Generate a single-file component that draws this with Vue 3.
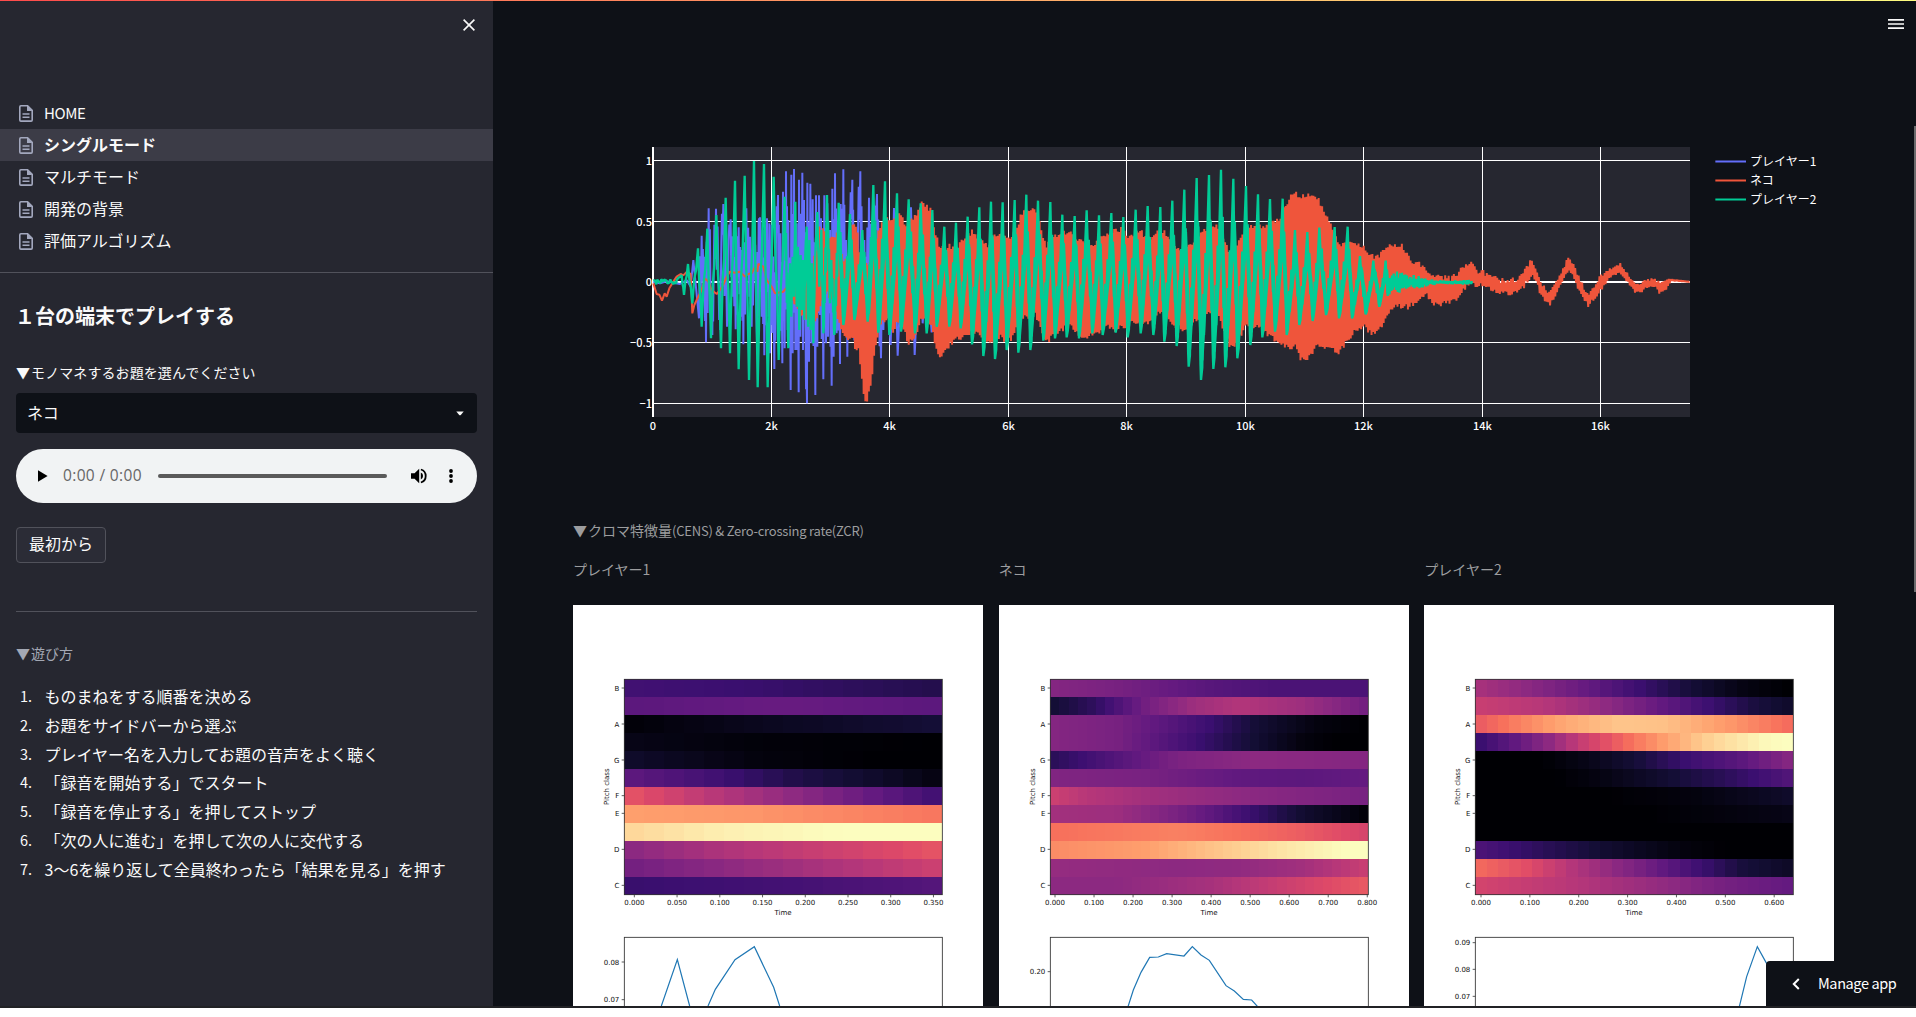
<script setup>
const pages = ['HOME', 'シングルモード', 'マルチモード', '開発の背景', '評価アルゴリズム']
const steps = [
  'ものまねをする順番を決める',
  'お題をサイドバーから選ぶ',
  'プレイヤー名を入力してお題の音声をよく聴く',
  '「録音を開始する」でスタート',
  '「録音を停止する」を押してストップ',
  '「次の人に進む」を押して次の人に交代する',
  '3〜6を繰り返して全員終わったら「結果を見る」を押す',
]

// Deterministic jitter in -1..1
const noise = (i) => {
  const s = Math.sin(i * 12.9898) * 43758.5453
  return (s - Math.floor(s)) * 2 - 1
}
const pairs = (flat) => {
  const out = []
  for (let i = 0; i < flat.length; i += 2) out.push([flat[i], flat[i + 1]])
  return out
}
const join = (pts) => pts.map((p) => p[0].toFixed(1) + ',' + p[1].toFixed(1)).join(' ')

// Waveforms, in thirds of a pixel
const player2Peaks = pairs([
  170, 450, 185, 435, 192, 495, 204, 402, 217, 520, 234, 355, 245, 590, 262, 296, 273, 625, 289, 255, 303, 655, 317, 203,
  330, 670, 345, 152, 356, 718, 374, 137, 387, 750, 402, 93, 413, 772, 432, 102, 443, 772, 461, 140, 476, 690,
  494, 200, 505, 655, 510, 400, 514, 560, 518, 380, 522, 500, 526, 215, 530, 530, 534, 350, 538, 600, 542, 375, 546, 540,
  549, 390, 553, 570, 556, 370, 560, 290, 564, 590, 568, 330, 572, 600, 576, 400, 580, 640, 585, 400, 592, 246, 598, 470,
  604, 300, 610, 610, 621, 195, 630, 520, 634, 390, 643, 615, 656, 218,
  670, 585, 690, 252, 703, 570, 727, 300, 743, 575, 760, 165, 775, 608, 795, 154, 808, 615, 831, 190, 843, 605,
  866, 208, 885, 610, 902, 220, 920, 610, 937, 240, 950, 590, 973, 290, 988, 590, 1008, 278, 1022, 595, 1043, 260,
  1056, 643, 1078, 232, 1090, 678, 1113, 215, 1125, 687, 1148, 217, 1160, 660, 1184, 210, 1195, 668, 1219, 194,
  1231, 660, 1254, 212, 1270, 632, 1291, 216, 1305, 625, 1327, 254, 1340, 622, 1364, 258, 1377, 625, 1400, 241,
  1417, 610, 1437, 256, 1448, 615, 1474, 249, 1487, 608, 1510, 261, 1523, 622, 1547, 239, 1562, 610, 1583, 228,
  1600, 615, 1621, 231, 1633, 635, 1657, 212, 1670, 648, 1693, 179, 1706, 710, 1730, 144, 1743, 750, 1767, 135,
  1780, 717, 1803, 119, 1816, 712, 1840, 146, 1852, 685, 1878, 168, 1891, 645, 1914, 193, 1927, 622, 1950, 207,
  1965, 605, 1988, 206, 2000, 615, 2025, 300, 2038, 585, 2062, 306, 2078, 573, 2098, 293, 2118, 555, 2144, 291,
  2157, 565, 2183, 290, 2196, 565, 2220, 378, 2237, 553, 2260, 392, 2278, 530, 2297, 392, 2303, 498,
])
function player2Line() {
  const pts = []
  for (let x = 100; x < 170; x += 3) pts.push([x, 456 + noise(x) * 8])
  const plain = [[0, 0], [0.35, 0.45], [0.65, 0.6]]
  // falling edges stay steep, rising edges carry a short reversal near the middle
  const fall = [[0, 0], [0.28, 0.42], [0.38, 0.24], [0.58, 0.7], [0.7, 0.5], [0.88, 0.92]]
  const rise = [[0, 0], [0.16, 0.06], [0.3, 0.42], [0.38, 0.22], [0.56, 0.62], [0.66, 0.44], [0.82, 0.76]]
  player2Peaks.forEach(([x, y], i) => {
    const next = player2Peaks[i + 1]
    if (!next) return pts.push([x, y])
    const shape = x < 480 || next[0] - x < 8 ? plain : next[1] > y ? fall : rise
    for (const [tx, ty] of shape) pts.push([x + (next[0] - x) * tx, y + (next[1] - y) * ty])
  })
  for (let x = 2306, k = 0; x < 2557; x += 2.5, k++) {
    const fade = x < 2450 ? 7 + (2450 - x) * 0.22 : 7
    pts.push([x, 457 + (k % 2 ? 1 : -1) * fade * (0.65 + 0.35 * noise(k))])
  }
  return join(pts)
}
// Broad inner body of the same wave, with the peaks held short of their tips
const player2Body = join(player2Peaks
  .filter(([x]) => x > 650)
  .map(([x, y]) => [x + 2, 456 + (y - 456) * (y < 456 ? 0.58 : 0.8)]))

const player1Base = pairs([
  100, 456, 120, 460, 140, 454, 160, 458, 180, 462, 200, 450, 212, 470, 220, 390, 237, 565, 245, 317, 251, 500, 254, 380,
  258, 637, 266, 235, 272, 520, 277, 615, 281, 430, 288, 236, 296, 480, 301, 600, 304, 340, 310, 222, 321, 590, 326, 330,
  332, 268, 338, 500, 341, 320, 347, 598, 352, 400, 356, 292, 363, 560, 366, 360, 370, 643, 379, 235, 388, 500,
  390, 320, 395, 590, 402, 300, 408, 500, 411, 640, 416, 275, 420, 262, 425, 560, 428, 300, 433, 676, 441, 265,
  446, 560, 448, 280, 450, 670, 455, 284, 463, 717, 468, 330, 474, 195, 478, 600, 481, 310, 487, 700, 489, 185,
  494, 655, 498, 124, 503, 600, 505, 270, 512, 780, 514, 134, 518, 670, 522, 117, 526, 660, 530, 280, 536, 787,
  537, 149, 541, 620, 547, 128, 549, 660, 552, 210, 557, 650, 561, 820, 562, 158, 567, 695, 571, 161, 574, 640,
  578, 208, 586, 795, 588, 196, 592, 650, 597, 196, 600, 555, 603, 265, 610, 748, 613, 196, 618, 640, 622, 220,
  624, 620, 630, 300, 635, 767, 637, 176, 641, 680, 645, 130, 650, 610, 654, 300, 660, 702, 662, 222, 666, 590,
  670, 118, 675, 600, 678, 330, 682, 680, 690, 300, 697, 149, 701, 560, 708, 655, 714, 310, 721, 124, 727, 600,
  733, 330, 740, 560, 747, 203, 755, 560, 760, 330, 771, 192, 777, 540, 783, 685, 795, 300, 805, 530, 812, 645,
  822, 234, 833, 677, 850, 300, 860, 560, 873, 232, 884, 675, 900, 330, 908, 580, 920, 400, 935, 607, 945, 456,
])
// Each swing is doubled by a smaller one through the middle band
const player1Points = player1Base.flatMap(([x, y], i) => {
  const next = player1Base[i + 1]
  if (!next || x < 225 || x > 790 || next[0] - x < 3.5) return [[x, y]]
  const dx = next[0] - x
  const dy = next[1] - y
  return [[x, y], [x + dx * 0.3, y + dy * 0.75], [x + dx * 0.6, y + dy * 0.22]]
})

const catStart = pairs([
  100, 460, 110, 492, 118, 494, 126, 512, 134, 490, 140, 500, 148, 475, 160, 455, 170, 440, 182, 432, 190, 436,
  200, 426, 212, 432, 217, 550, 223, 525, 230, 510, 245, 480, 255, 445, 265, 455, 275, 480, 290, 492, 300, 480,
  310, 465, 320, 440, 330, 425, 345, 428, 360, 425, 375, 440, 385, 432, 395, 430, 405, 412, 412, 425, 415, 402,
  430, 410, 440, 450, 455, 470, 465, 490, 490, 485, 510, 460,
])
// x, upper edge, lower edge
const catEnvelope = [
  510, 455, 480, 520, 440, 520, 545, 430, 550, 565, 420, 580, 580, 400, 590, 598, 295, 540, 612, 295, 480, 622, 330, 490,
  640, 325, 520, 653, 305, 560, 662, 370, 600, 672, 390, 625, 685, 400, 635, 697, 290, 620, 705, 288, 655, 715, 320, 660,
  722, 420, 715, 730, 400, 790, 737, 400, 820, 747, 400, 790, 755, 390, 745, 765, 350, 660, 775, 310, 600, 785, 280, 570,
  800, 270, 568, 820, 272, 600, 843, 248, 560, 857, 290, 620, 867, 270, 640, 885, 262, 615, 900, 225, 580, 912, 218, 555,
  920, 228, 580, 935, 245, 585, 945, 310, 640, 955, 340, 670, 963, 355, 680, 985, 350, 650, 1010, 350, 628,
  1035, 325, 620, 1057, 302, 600, 1075, 320, 615, 1100, 350, 635, 1120, 320, 638, 1140, 312, 620, 1165, 320, 635,
  1185, 310, 610, 1200, 265, 570, 1215, 237, 560, 1230, 245, 570, 1240, 235, 540, 1254, 260, 570, 1270, 320, 620,
  1280, 345, 640, 1300, 320, 610, 1320, 315, 600, 1350, 300, 585, 1375, 330, 610, 1400, 335, 620, 1415, 350, 615,
  1440, 325, 605, 1465, 308, 590, 1490, 297, 600, 1510, 300, 590, 1525, 325, 580, 1560, 303, 575, 1580, 325, 580,
  1600, 320, 560, 1625, 300, 540, 1650, 325, 570, 1673, 355, 590, 1690, 360, 602, 1710, 345, 590, 1730, 320, 570,
  1745, 305, 550, 1770, 295, 545, 1790, 283, 545, 1800, 295, 565, 1812, 330, 600, 1830, 370, 650, 1850, 350, 640,
  1865, 318, 610, 1880, 300, 580, 1900, 290, 585, 1930, 292, 605, 1955, 270, 615, 1975, 268, 645, 1995, 235, 645,
  2013, 200, 655, 2027, 188, 650, 2040, 200, 682, 2065, 193, 683, 2095, 207, 640, 2120, 265, 660, 2140, 295, 660,
  2160, 345, 665, 2180, 340, 635, 2205, 335, 605, 2230, 350, 585, 2250, 378, 608, 2270, 380, 605, 2290, 365, 580,
  2315, 340, 535, 2335, 345, 525, 2350, 350, 530, 2370, 390, 530, 2400, 405, 505, 2420, 415, 495, 2430, 430, 515,
  2460, 440, 525, 2500, 445, 510, 2530, 418, 480, 2552, 405, 455, 2570, 425, 460, 2610, 438, 470, 2640, 455, 487,
  2675, 455, 490, 2695, 450, 485, 2715, 420, 460, 2735, 395, 435, 2750, 428, 450, 2765, 470, 500, 2788, 490, 523,
  2805, 470, 500, 2825, 430, 455, 2842, 391, 422, 2858, 400, 435, 2875, 440, 470, 2890, 475, 500, 2905, 495, 522,
  2920, 480, 505, 2940, 445, 480, 2955, 430, 455, 2980, 415, 430, 2998, 403, 428, 3020, 430, 450, 3035, 455, 470,
  3052, 468, 488, 3080, 452, 470, 3105, 450, 468, 3120, 465, 488, 3140, 455, 472, 3152, 448, 452, 3210, 455, 456,
]
function catLine() {
  const pts = [...catStart]
  let seg = 0
  for (let x = 510, k = 0; x <= 3210; x += 2.6, k++) {
    while (catEnvelope[seg + 3] < x && seg + 6 < catEnvelope.length) seg += 3
    const [x0, a0, b0, x1, a1, b1] = catEnvelope.slice(seg, seg + 6)
    const t = (x - x0) / (x1 - x0)
    const top = a0 + (a1 - a0) * t
    const bottom = b0 + (b1 - b0) * t
    const wobble = Math.min(9, (bottom - top) * 0.25) * noise(k)
    const pad = x > 2500 && x < 3150 ? 3 : 0
    pts.push([x, k % 2 ? bottom + pad + wobble : top - pad + wobble])
  }
  return join(pts)
}

const traces = [
  { name: 'プレイヤー1', color: '#636efa', points: join(player1Points), width: 6 },
  { name: 'ネコ', color: '#ef553b', points: catLine(), width: 6 },
  { name: 'プレイヤー2', color: '#00cc96', points: player2Line(), width: 7 },
]
const xTicks = [['0', 99], ['2k', 454.5], ['4k', 808.5], ['6k', 1165.5], ['8k', 1519.5], ['10k', 1876.5], ['12k', 2230.5], ['14k', 2587.5], ['16k', 2941.5]]
const yTicks = [['1', 91.5], ['0.5', 274.5], ['0', 456], ['−0.5', 637.5], ['−1', 820.5]]

// Magma colour scale
const magma = [[0, 0, 4], [20, 14, 54], [59, 15, 112], [100, 26, 128], [140, 41, 129], [183, 55, 121], [222, 73, 104], [247, 112, 92], [254, 159, 109], [254, 207, 146], [252, 253, 191]]
const toColor = (v) => {
  const s = Math.max(0, Math.min(9.999, v * 10))
  const i = Math.floor(s)
  const c = magma[i].map((a, k) => Math.round(a + (magma[i + 1][k] - a) * (s - i)))
  return `rgb(${c})`
}
// Each row lists position,value stops
const sample = (stops, t) => {
  let i = 0
  while (i + 4 < stops.length && stops[i + 2] < t) i += 2
  const f = Math.max(0, Math.min(1, (t - stops[i]) / (stops[i + 2] - stops[i])))
  return stops[i + 1] + (stops[i + 3] - stops[i + 1]) * f
}
const cells = (rows, columns) => {
  const w = 954 / columns
  return rows.flatMap((stops, r) =>
    Array.from({ length: columns }, (_, c) => ({
      x: 154 + Math.round(c * w),
      y: 223 + Math.round((r * 646) / 12),
      w: Math.round((c + 1) * w) - Math.round(c * w),
      h: Math.round(((r + 1) * 646) / 12) - Math.round((r * 646) / 12),
      fill: toColor(sample(stops, c / (columns - 1))),
    })))
}
const notes = [['B', 249], ['A', 357], ['G', 465], ['F', 572], ['E', 625], ['D', 733], ['C', 841]]
const timeTicks = (count, start, gap, step) =>
  Array.from({ length: count }, (_, i) => [(i * step).toFixed(3), start + i * gap])

const figures = [
  {
    name: 'プレイヤー1',
    cells: cells([
      [0, 0.215, 0.4, 0.195, 1, 0.14], [0, 0.28, 0.5, 0.31, 1, 0.28], [0, 0.01, 0.4, 0.05, 1, 0.1],
      [0, 0.035, 0.4, 0.012, 1, 0], [0, 0.075, 0.4, 0.02, 0.8, 0, 1, 0], [0, 0.28, 0.25, 0.22, 0.55, 0.13, 0.8, 0.08, 1, 0.03],
      [0, 0.62, 0.25, 0.51, 0.6, 0.38, 0.85, 0.28, 1, 0.22], [0, 0.8, 0.4, 0.78, 1, 0.715], [0, 0.92, 0.3, 0.97, 0.7, 1, 1, 1],
      [0, 0.4, 0.3, 0.48, 0.7, 0.56, 1, 0.625], [0, 0.34, 0.5, 0.44, 1, 0.55], [0, 0.195, 0.5, 0.22, 1, 0.26],
    ], 16),
    times: timeTicks(8, 184, 128.2, 0.05),
    rates: [['0.08', 1071], ['0.07', 1184]],
    curve: '265,1203 313,1064 350,1203 368,1260 405,1203 427,1153 486,1064 544,1025 602,1147 620,1203',
  },
  {
    name: 'ネコ',
    cells: cells([
      [0, 0.38, 0.2, 0.35, 0.5, 0.27, 0.7, 0.24, 1, 0.24], [0, 0.1, 0.13, 0.17, 0.2, 0.24, 0.3, 0.34, 0.45, 0.44, 0.6, 0.49, 0.8, 0.44, 1, 0.34],
      [0, 0.38, 0.2, 0.35, 0.35, 0.28, 0.5, 0.2, 0.65, 0.1, 0.85, 0.02, 1, 0], [0, 0.38, 0.2, 0.35, 0.43, 0.22, 0.6, 0.12, 0.8, 0.02, 0.9, 0, 1, 0],
      [0, 0.16, 0.08, 0.2, 0.2, 0.26, 0.4, 0.36, 0.65, 0.4, 1, 0.38], [0, 0.37, 0.3, 0.35, 0.6, 0.29, 0.8, 0.28, 1, 0.3],
      [0, 0.55, 0.1, 0.5, 0.3, 0.45, 0.6, 0.4, 1, 0.35], [0, 0.45, 0.2, 0.44, 0.38, 0.36, 0.5, 0.29, 0.63, 0.2, 0.8, 0.09, 1, 0.01],
      [0, 0.7, 0.4, 0.735, 0.6, 0.7, 0.8, 0.65, 1, 0.58], [0, 0.76, 0.3, 0.8, 0.5, 0.87, 0.75, 0.95, 0.95, 1, 1, 1],
      [0, 0.42, 0.4, 0.4, 0.6, 0.41, 0.8, 0.45, 1, 0.54], [0, 0.4, 0.2, 0.4, 0.5, 0.46, 0.8, 0.57, 1, 0.64],
    ], 35),
    times: timeTicks(9, 168, 117.1, 0.1),
    rates: [['0.20', 1100]],
    curve: '387,1205 403,1155 426,1102 452,1057 478,1056 503,1046 555,1053 580,1025 606,1050 631,1066 681,1142 706,1158 733,1183 758,1185 776,1205',
  },
  {
    name: 'プレイヤー2',
    cells: cells([
      [0, 0.46, 0.15, 0.4, 0.35, 0.3, 0.5, 0.21, 0.65, 0.12, 0.85, 0.03, 1, 0], [0, 0.54, 0.2, 0.5, 0.4, 0.41, 0.6, 0.29, 0.75, 0.2, 0.88, 0.12, 1, 0.08],
      [0, 0.65, 0.1, 0.72, 0.25, 0.81, 0.45, 0.88, 0.6, 0.87, 0.8, 0.79, 1, 0.69], [0, 0.2, 0.12, 0.3, 0.22, 0.4, 0.32, 0.53, 0.42, 0.63, 0.5, 0.71, 0.6, 0.8, 0.75, 0.91, 0.93, 0.99, 1, 1],
      [0, 0, 0.2, 0, 0.35, 0.04, 0.5, 0.1, 0.65, 0.19, 0.85, 0.28, 1, 0.38], [0, 0, 0.25, 0, 0.4, 0.03, 0.6, 0.09, 0.8, 0.16, 1, 0.25],
      [0, 0, 0.4, 0, 0.7, 0.02, 1, 0.075], [0, 0, 0.55, 0, 1, 0.035], [0, 0, 1, 0],
      [0, 0.24, 0.2, 0.16, 0.4, 0.09, 0.65, 0.02, 0.8, 0, 1, 0], [0, 0.68, 0.15, 0.61, 0.3, 0.49, 0.5, 0.36, 0.68, 0.23, 0.85, 0.11, 1, 0.07],
      [0, 0.57, 0.3, 0.5, 0.6, 0.41, 0.8, 0.34, 1, 0.3],
    ], 28),
    times: timeTicks(7, 171, 146.6, 0.1),
    rates: [['0.09', 1013], ['0.08', 1093], ['0.07', 1174]],
    curve: '946,1205 968,1115 1000,1025 1026,1072 1053,1115',
  },
]
</script>

<template>
  <div class="app">
    <div class="rainbow"></div>
    <aside class="sidebar">
      <div class="close-row">
        <svg width="12" height="12" viewBox="0 0 12 12"><path d="M.6.6 11.4 11.4M11.4.6.6 11.4" stroke="#fafafa" stroke-width="1.6" /></svg>
      </div>
      <nav>
        <a v-for="(page, i) in pages" :key="page" class="page" :class="{ active: i === 1 }">
          <svg class="doc" width="14" height="17" viewBox="0 0 14 17">
            <path d="M1.9.8H8.6L13.2 5.4V15Q13.2 16.1 12.1 16.1H1.9Q.8 16.1 .8 15V1.9Q.8 .8 1.9 .8Z" fill="none" stroke="#a3a8be" stroke-width="1.6" />
            <path d="M8 .8V6H13.5L8.6 .8ZM3.5 8.2h7v1.5h-7zM3.5 11.5h7V13h-7z" fill="#a3a8be" />
          </svg>
          <span :class="{ latin: i === 0 }">{{ page }}</span>
        </a>
      </nav>
      <div class="controls">
        <h1>１台の端末でプレイする</h1>
        <label><span class="mark">▼</span>モノマネするお題を選んでください</label>
        <div class="select">
          <span>ネコ</span>
          <svg width="8" height="5" viewBox="0 0 8 5"><path d="M.3.5H7.7L4.8 4Q4 4.7 3.2 4Z" fill="#fafafa" /></svg>
        </div>
        <div class="player">
          <svg width="10" height="12" viewBox="0 0 10 12"><path d="M0 .3V11.7L9.6 6Z" fill="#000" /></svg>
          <span class="clock">0:00 / 0:00</span>
          <div class="track"></div>
          <svg class="volume" width="16" height="16" viewBox="0 0 16 16">
            <path d="M0 5.2V10.8H3.6L8.2 15.2V.8L3.6 5.2Z" fill="#000" />
            <path d="M9.8 4.6A3.7 3.7 0 0 1 9.8 11.4Z" fill="#000" />
            <path d="M9.9 1.5A6.8 6.8 0 0 1 9.9 14.5" fill="none" stroke="#000" stroke-width="1.8" />
          </svg>
          <svg width="4" height="14" viewBox="0 0 4 14"><circle cx="2" cy="2" r="1.9" /><circle cx="2" cy="7" r="1.9" /><circle cx="2" cy="12" r="1.9" /></svg>
        </div>
        <button>最初から</button>
        <hr />
        <p class="howto"><span class="mark">▼</span>遊び方</p>
        <ol>
          <li v-for="(step, i) in steps" :key="step"><span class="num">{{ i + 1 }}.</span><span>{{ step }}</span></li>
        </ol>
      </div>
    </aside>

    <main>
      <svg class="wave" width="1290" height="320" viewBox="-141 0 3870 960">
        <rect x="99" y="51" width="3111" height="810" fill="#262730" />
        <g stroke="#fff" stroke-width="3">
          <line v-for="t in xTicks.slice(1)" :key="t[0]" :x1="t[1]" :x2="t[1]" y1="51" y2="861" />
          <line v-for="t in yTicks" :key="t[0]" x1="99" x2="3210" :y1="t[1]" :y2="t[1]" :stroke-width="t[0] === '0' ? 6 : 3" shape-rendering="crispEdges" />
        </g>
        <line x1="99" x2="99" y1="51" y2="861" stroke="#fff" stroke-width="6" />
        <polyline v-for="t in traces" :key="t.name" :points="t.points" fill="none" :stroke="t.color" :stroke-width="t.width" stroke-linejoin="bevel" />
        <polyline :points="player2Body" fill="none" stroke="#00cc96" stroke-width="11" stroke-linejoin="bevel" />
        <g class="axis">
          <text v-for="t in xTicks" :key="t[0]" :x="t[1]" y="900" text-anchor="middle">{{ t[0] }}</text>
          <text v-for="t in yTicks" :key="t[0]" x="96" :y="t[1] + 12" text-anchor="end">{{ t[0] }}</text>
        </g>
        <g v-for="(t, i) in traces" :key="t.name" class="legend">
          <line x1="3286" x2="3378" :y1="94.5 + i * 57" :y2="94.5 + i * 57" :stroke="t.color" stroke-width="6" />
          <text x="3390" :y="109 + i * 57">{{ t.name }}</text>
        </g>
      </svg>

      <p class="caption title"><span class="mark">▼</span>クロマ特徴量<span class="small-latin">(CENS) &amp; Zero-crossing rate(ZCR)</span></p>
      <div class="figures">
        <section v-for="f in figures" :key="f.name">
          <p class="caption">{{ f.name }}</p>
          <svg class="figure" viewBox="0 0 1230 1206">
            <rect width="1230" height="1206" fill="#fff" />
            <g shape-rendering="crispEdges">
              <rect v-for="(c, i) in f.cells" :key="i" :x="c.x" :y="c.y" :width="c.w" :height="c.h" :fill="c.fill" />
            </g>
            <rect x="154" y="223" width="954" height="646" class="frame" />
            <rect x="154" y="997" width="954" height="400" class="frame" />
            <g v-for="n in notes" :key="n[0]">
              <path :d="`M146 ${n[1]}h8`" class="tick" />
              <text x="139" :y="n[1] + 8" text-anchor="end">{{ n[0] }}</text>
            </g>
            <g v-for="t in f.times" :key="t[0]">
              <path :d="`M${t[1]} 869v8`" class="tick" />
              <text :x="t[1]" y="899" text-anchor="middle">{{ t[0] }}</text>
            </g>
            <g v-for="r in f.rates" :key="r[0]">
              <path :d="`M146 ${r[1]}h8`" class="tick" />
              <text x="139" :y="r[1] + 8" text-anchor="end">{{ r[0] }}</text>
            </g>
            <text x="630" y="929" text-anchor="middle">Time</text>
            <text transform="translate(108 545) rotate(-90)" text-anchor="middle">Pitch class</text>
            <polyline :points="f.curve" fill="none" stroke="#1f77b4" stroke-width="3.6" />
          </svg>
        </section>
      </div>
    </main>

    <svg class="menu" width="16" height="10" viewBox="0 0 16 10"><path d="M0 0h16v1.7H0zM0 4.15h16v1.7H0zM0 8.3h16V10H0z" fill="#fafafa" /></svg>
    <div class="scrollbar"></div>
    <div class="manage">
      <svg width="8" height="12" viewBox="0 0 8 12"><path d="M6.8 1 1.8 6l5 5" fill="none" stroke="#fff" stroke-width="2" /></svg>
      <span>Manage app</span>
    </div>
  </div>
</template>

<style>
body { background: #fff; }
</style>

<style scoped>
.app {
  position: relative;
  display: flex;
  box-sizing: border-box;
  width: 1916px;
  height: 1008px;
  overflow: hidden;
  border-bottom: 2px solid #212225;
  background: #0e1117;
  color: #fafafa;
  font-family: "Noto Sans CJK JP", sans-serif;
  font-size: 16px;
}
.rainbow {
  position: absolute;
  z-index: 2;
  top: 0;
  left: 0;
  width: 100%;
  height: 1px;
  background: linear-gradient(90deg, #ff4b4b, #fffd80);
}
.sidebar { flex: none; width: 493px; background: #262730; }
.close-row { display: flex; justify-content: flex-end; box-sizing: border-box; height: 97px; padding: 19px 18px 0 0; }
nav { padding-bottom: 15px; border-bottom: 1px solid #51525b; }
.page { display: flex; align-items: center; height: 32px; padding-left: 19px; gap: 11px; line-height: 30px; }
.page span { padding-bottom: 2px; }
.page.active { background: #3c3c47; font-weight: 700; }
.page .latin { padding: 0 0 1px; font-size: 15px; letter-spacing: -0.4px; }
.doc { flex: none; }
.controls { padding: 0 16px; }
h1 { margin: 29px 0 0 -1px; font-size: 20px; line-height: 28px; font-weight: 700; }
label { display: block; margin-top: 31px; font-size: 14px; line-height: 22px; letter-spacing: 0.08px; }
.mark { display: inline-block; width: 14.5px; margin-right: 0.6px; }
.select { display: flex; align-items: center; justify-content: space-between; height: 40px; margin-top: 10px; padding: 0 13px 0 11px; border-radius: 4px; background: #0e1117; }
.select span { padding-bottom: 2px; }
.player { display: flex; align-items: center; box-sizing: border-box; height: 54px; margin-top: 16px; padding: 0 24px 0 22px; border-radius: 27px; background: #f1f3f4; }
.clock { width: 95px; margin-left: 15px; padding-bottom: 2px; color: #666; font: 400 15.5px/20px "Open Sans", sans-serif; letter-spacing: 0.35px; white-space: nowrap; }
.track { width: 229px; height: 4px; border-radius: 2px; background: #5a5a5a; }
.volume { margin: 0 22px 0 24px; }
button { display: block; box-sizing: border-box; width: 90px; height: 36px; margin-top: 24px; padding: 0 0 4px; border: 1px solid #51525b; border-radius: 4px; background: #2b2c36; color: #fafafa; font: inherit; line-height: 30px; }
hr { height: 1px; margin: 48px 0 0; border: 0; background: #51525b; }
.howto { margin: 30px 0 0; color: #a3a8b4; font-size: 14px; line-height: 22px; }
ol { margin: 18px 0 0; padding: 0; list-style: none; }
li { display: flex; height: 28.8px; line-height: 28.8px; white-space: nowrap; }
.num { width: 28.5px; padding-left: 4px; box-sizing: border-box; font-size: 14.5px; }
main { width: 1423px; padding: 130px 0 0 80px; box-sizing: border-box; }
.wave { display: block; }
.axis text { fill: #fff; font-size: 33px; font-weight: 500; }
.legend text { fill: #fff; font-size: 36px; }
.caption { margin: 0; color: #9c9d9f; font-size: 14px; line-height: 22px; }
.caption.title { margin-top: 69px; }
.small-latin { font-size: 13px; letter-spacing: -0.22px; }
.figures { display: flex; gap: 16px; width: 1261px; margin-top: 16px; }
section { flex: 1; min-width: 0; }
.figure { display: block; width: 410px; height: 402px; margin-top: 25px; font-family: "DejaVu Sans", sans-serif; font-size: 21px; fill: #111; }
.frame { fill: none; stroke: #333; stroke-width: 2.6px; }
.tick { stroke: #333; stroke-width: 2.4px; }
.menu { position: absolute; top: 19px; right: 12px; }
.scrollbar { position: absolute; top: 126px; right: 0; width: 2px; height: 466px; background: #6b6b6d; }
.manage { position: absolute; right: 0; bottom: 0; display: flex; align-items: center; box-sizing: border-box; width: 150px; height: 45px; padding-left: 26px; gap: 18px; border-radius: 4px 0 0; background: #0e1117; color: #fff; font-size: 14.5px; letter-spacing: -0.4px; white-space: nowrap; }
.manage span { padding-bottom: 2px; }
</style>
